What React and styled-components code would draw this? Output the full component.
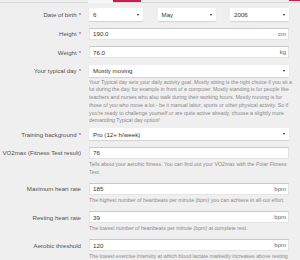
import React from 'react'
import styled, { createGlobalStyle } from 'styled-components'

const GlobalStyle = createGlobalStyle`
  body {
    margin: 0;
    background: #efefef;
    font-family: "Liberation Sans", Arial, sans-serif;
    color: #333;
  }
`

function Select({ value, tall }) {
  return (
    <SelectBox tall={tall}>
      <span>{value}</span>
      <Arrow />
    </SelectBox>
  )
}

function Input({ value, unit }) {
  return (
    <InputBox>
      <input type='text' value={value} readOnly />
      {unit && <Unit>{unit}</Unit>}
    </InputBox>
  )
}

function Row({ label, required, children, help, tight }) {
  return (
    <RowWrapper tight={tight}>
      <Label>
        {label}
        {required && <Star>*</Star>}
      </Label>
      <Field>
        {children}
        {help && (
          <Help>
            {help.map(line => (
              <HelpLine key={line}>{line}</HelpLine>
            ))}
          </Help>
        )}
      </Field>
    </RowWrapper>
  )
}

const typicalDayHelp = [
  'Your Typical day sets your daily activity goal. Mostly sitting is the right choice if you sit a',
  'lot during the day, for example in front of a computer. Mostly standing is for people like',
  'teachers and nurses who also walk during their working hours. Mostly moving is for',
  'those of you who move a lot - be it manual labor, sports or other physical activity. So if',
  "you're ready to challenge yourself or are quite active already, choose a slightly more",
  'demanding Typical day option!',
]

function App() {
  return (
    <>
      <GlobalStyle />
      <TabStrip>
        <TabSpace />
        <Tab />
        <Tab active />
        <TabRest />
        <Corner />
      </TabStrip>
      <Form>
        <Row label='Date of birth' required>
          <DateGrid>
            <Select value='6' tall />
            <Select value='May' tall />
            <Select value='2006' tall />
          </DateGrid>
        </Row>
        <Row label='Height' required>
          <Input value='190.0' unit='cm' />
        </Row>
        <Row label='Weight' required>
          <Input value='76.0' unit='kg' />
        </Row>
        <Row label='Your typical day' required tight help={typicalDayHelp}>
          <Select value='Mostly moving' />
        </Row>
        <Row label='Training background' required>
          <Select value='Pro (12+ h/week)' />
        </Row>
        <Row
          label='VO2max (Fitness Test result)'
          help={[
            'Tells about your aerobic fitness. You can find out your VO2max with the Polar Fitness',
            'Test.',
          ]}
        >
          <Input value='76' />
        </Row>
        <Row
          label='Maximum heart rate'
          help={['The highest number of heartbeats per minute (bpm) you can achieve in all-out effort.']}
        >
          <Input value='185' unit='bpm' />
        </Row>
        <Row
          label='Resting heart rate'
          help={['The lowest number of heartbeats per minute (bpm) at complete rest.']}
        >
          <Input value='39' unit='bpm' />
        </Row>
        <Row
          label='Aerobic threshold'
          help={[
            'The lowest exercise intensity at which blood lactate markedly increases above resting',
            'level.',
          ]}
        >
          <Input value='120' unit='bpm' />
        </Row>
      </Form>
    </>
  )
}

export default App

const TabStrip = styled.div`
  display: flex;
  height: 3px;
  box-shadow: inset 0 -1px 0 #d9d9d9;
`
const TabSpace = styled.div`
  width: 88px;
`
const Tab = styled.div`
  width: ${p => (p.active ? '28px' : '25px')};
  height: ${p => (p.active ? '2px' : '3px')};
  background: ${p => (p.active ? '#d4194a' : '#f7f7f7')};
`
const TabRest = styled.div`
  flex: 1;
`
const Corner = styled.div`
  width: 11px;
  height: 1px;
  background: #d4194a;
`
const Form = styled.div`
  display: flex;
  flex-direction: column;
  padding: 5px 11px 0 0;
`
const RowWrapper = styled.div`
  display: grid;
  grid-template-columns: 81px 200px;
  align-items: start;
  column-gap: 8px;
  margin-bottom: ${p => (p.tight ? '3px' : '6.5px')};
`
const Label = styled.div`
  height: 12px;
  display: flex;
  align-items: center;
  justify-content: flex-end;
  font-size: 6.1px;
  color: #505050;
  white-space: nowrap;
`
const Star = styled.span`
  color: #d4194a;
  margin-left: 2px;
`
const Field = styled.div`
  display: flex;
  flex-direction: column;
`
const DateGrid = styled.div`
  display: grid;
  grid-template-columns: 54px 58px 59px;
  justify-content: space-between;
`
const SelectBox = styled.div`
  box-sizing: border-box;
  height: ${p => (p.tall ? '13px' : '12px')};
  display: flex;
  align-items: center;
  justify-content: space-between;
  padding: 0 4px;
  background: #fff;
  border-radius: 1px;
  box-shadow: 0 1px 1px rgba(0, 0, 0, 0.12);
  font-size: 6.2px;
  color: #333;
`
const Arrow = styled.i`
  width: 0;
  height: 0;
  border-left: 1.5px solid transparent;
  border-right: 1.5px solid transparent;
  border-top: 2px solid #222;
`
const InputBox = styled.div`
  box-sizing: border-box;
  height: 12px;
  display: flex;
  align-items: center;
  padding: 0 2px 0 3px;
  background: #fff;
  border: 1px solid #e4e4e4;
  border-top-color: #c9c9c9;

  input {
    flex: 1;
    min-width: 0;
    border: none;
    padding: 0;
    background: transparent;
    font-family: "Liberation Sans", Arial, sans-serif;
    font-size: 6.2px;
    color: #333;
  }
  input:focus {
    outline: none;
  }
`
const Unit = styled.span`
  font-size: 6px;
  color: #666;
`
const Help = styled.p`
  margin: 2px 0 0;
  font-size: 5.25px;
  line-height: 7.8px;
  color: #8a8a8a;
`
const HelpLine = styled.span`
  display: block;
  white-space: nowrap;
`
